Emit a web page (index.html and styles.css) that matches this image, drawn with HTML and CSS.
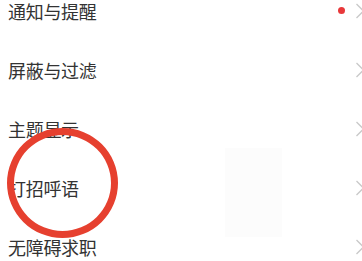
FILE: index.html
```html
<!DOCTYPE html>
<html lang="zh">
<head>
    <meta charset="UTF-8">
    <meta name="viewport" content="width=device-width, initial-scale=1.0">
    <title>设置</title>
    <link rel="stylesheet" href="styles.css">
</head>
<body>

    <ul class="settings">
        <li class="row">
            <span class="label">通知与提醒</span>
            <span class="extra">
                <span class="dot"></span>
                <svg class="chevron" viewBox="0 0 9 16"><polyline points="1,1 8,8 1,15"/></svg>
            </span>
        </li>
        <li class="row">
            <span class="label">屏蔽与过滤</span>
            <span class="extra">
                <svg class="chevron" viewBox="0 0 9 16"><polyline points="1,1 8,8 1,15"/></svg>
            </span>
        </li>
        <li class="row">
            <span class="label">主题显示</span>
            <span class="extra">
                <svg class="chevron" viewBox="0 0 9 16"><polyline points="1,1 8,8 1,15"/></svg>
            </span>
        </li>
        <li class="row">
            <span class="label">打招呼语</span>
            <span class="extra">
                <svg class="chevron" viewBox="0 0 9 16"><polyline points="1,1 8,8 1,15"/></svg>
            </span>
        </li>
        <li class="row">
            <span class="label">无障碍求职</span>
            <span class="extra">
                <svg class="chevron" viewBox="0 0 9 16"><polyline points="1,1 8,8 1,15"/></svg>
            </span>
        </li>
    </ul>

    <!-- annotation drawn over the screenshot -->
    <div class="smudge"></div>
    <div class="ring"></div>

</body>
</html>
```

FILE: styles.css
```css
html, body {
    margin: 0;
    padding: 0;
    overflow: hidden;
    background-color: #fff;
}

body {
    position: relative;
    width: 362px;
    height: 261px;
    font-family: "Noto Sans CJK SC", "Noto Sans", sans-serif;
}

.settings {
    list-style: none;
    margin: -19px 0 0 0;
    padding: 0;
}

.row {
    display: flex;
    align-items: center;
    justify-content: space-between;
    height: 59px;
    padding-left: 8px;
    margin-right: -3px;
}

.label {
    font-size: 18px;
    line-height: 20px;
    color: #333;
    letter-spacing: -0.3px;
}

.extra {
    display: flex;
    align-items: center;
    gap: 10px;
}

.dot {
    width: 7px;
    height: 7px;
    border-radius: 50%;
    background-color: #e8383a;
}

.chevron {
    width: 10px;
    height: 16px;
    fill: none;
    stroke: #c9c9c9;
    stroke-width: 1.3;
}

.smudge {
    position: absolute;
    left: 225px;
    top: 148px;
    width: 57px;
    height: 89px;
    background-color: #fcfcfc;
}

.ring {
    position: absolute;
    left: 7px;
    top: 128px;
    width: 111px;
    height: 110px;
    box-sizing: border-box;
    border: 7px solid #e6402f;
    border-radius: 50%;
}
```
